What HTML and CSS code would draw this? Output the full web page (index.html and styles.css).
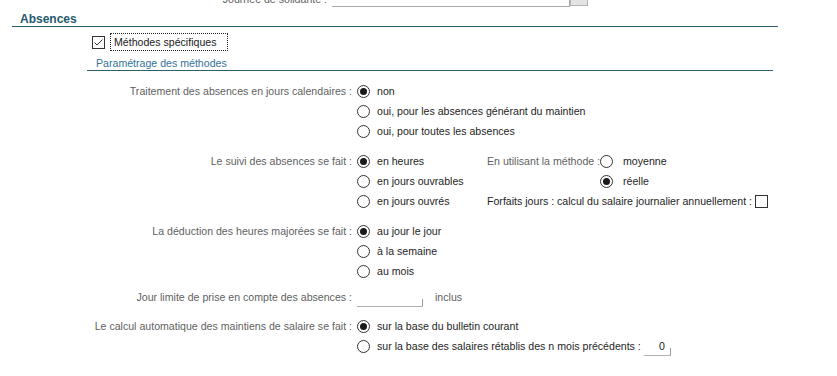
FILE: index.html
```html
<!DOCTYPE html>
<html lang="fr">
<head>
<meta charset="utf-8">
<title>Absences</title>
<link rel="stylesheet" href="styles.css">
</head>
<body>
<div class="top">
  <span class="top-label">Journée de solidarité :</span>
  <span class="top-input"></span>
  <span class="top-btn"></span>
</div>

<div class="section-title">Absences</div>

<div class="chk-row">
  <svg class="chk" width="13" height="13" viewBox="0 0 13 13"><rect x="0.5" y="0.5" width="12" height="12" fill="#fff" stroke="#333"/><polyline points="2.5,6.5 5,9 10.5,3.5" fill="none" stroke="#333" stroke-width="1"/></svg>
  <span class="chk-label">Méthodes spécifiques</span>
</div>

<div class="sub-title">Paramétrage des méthodes</div>

<div class="form">
  <div class="group g1">
    <div class="label">Traitement des absences en jours calendaires :</div>
    <div class="opts">
      <div class="opt"><span class="radio on"></span>non</div>
      <div class="opt"><span class="radio"></span>oui, pour les absences générant du maintien</div>
      <div class="opt"><span class="radio"></span>oui, pour toutes les absences</div>
    </div>
  </div>

  <div class="group g2">
    <div class="label">Le suivi des absences se fait :</div>
    <div class="opts">
      <div class="opt"><span class="radio on"></span>en heures</div>
      <div class="opt"><span class="radio"></span>en jours ouvrables</div>
      <div class="opt"><span class="radio"></span>en jours ouvrés</div>
    </div>
    <div class="right">
      <div class="label rlabel">En utilisant la méthode :</div>
      <div class="opt"><span class="radio wide"></span>moyenne</div>
      <div class="rspacer"></div>
      <div class="opt"><span class="radio wide on"></span>réelle</div>
      <div class="forfait"><span class="flabel">Forfaits jours : calcul du salaire journalier annuellement :</span><span class="box"></span></div>
    </div>
  </div>

  <div class="group g3">
    <div class="label">La déduction des heures majorées se fait :</div>
    <div class="opts">
      <div class="opt"><span class="radio on"></span>au jour le jour</div>
      <div class="opt"><span class="radio"></span>à la semaine</div>
      <div class="opt"><span class="radio"></span>au mois</div>
    </div>
  </div>

  <div class="group g4">
    <div class="label">Jour limite de prise en compte des absences :</div>
    <div class="opt"><span class="field day"></span><span class="muted">inclus</span></div>
  </div>

  <div class="group g5">
    <div class="label">Le calcul automatique des maintiens de salaire se fait :</div>
    <div class="opts">
      <div class="opt"><span class="radio on"></span>sur la base du bulletin courant</div>
      <div class="opt"><span class="radio"></span>sur la base des salaires rétablis des n mois précédents :<span class="field months">0</span></div>
    </div>
  </div>
</div>
</body>
</html>
```

FILE: styles.css
```css
html, body {
  margin: 0;
  padding: 0;
  background: #ffffff;
}

body {
  font-family: "Liberation Sans", Arial, sans-serif;
  font-size: 10.6px;
  color: #1e1e1e;
}

/* partially visible row at top */
.top {
  display: flex;
  align-items: flex-end;
  height: 7px;
  overflow: hidden;
}

.top-label {
  width: 327px;
  text-align: right;
  line-height: 12px;
  margin-bottom: 2px;
  color: #606060;
}

.top-input {
  box-sizing: border-box;
  margin-left: 5px;
  width: 238px;
  height: 20px;
  border-bottom: 1px solid #a9a9a9;
  border-right: 1px solid #a9a9a9;
}

.top-btn {
  box-sizing: border-box;
  width: 18px;
  height: 20px;
  margin-bottom: 1px;
  background: #e3e3e3;
  border: 1px solid #b5b5b5;
}

/* section header */
.section-title {
  margin: 5px 0 0 12px;
  width: 766px;
  padding-left: 8px;
  box-sizing: border-box;
  height: 15px;
  line-height: 14px;
  font-size: 12px;
  font-weight: bold;
  color: #265a70;
  border-bottom: 1px solid #2e5f6e;
}

.chk-row {
  display: flex;
  align-items: center;
  margin: 6px 0 0 92px;
  height: 18px;
}

.chk {
  display: block;
  flex: none;
}

.chk-label {
  box-sizing: border-box;
  margin-left: 5px;
  width: 118px;
  height: 18px;
  line-height: 16px;
  padding-left: 3px;
  border: 1px dotted #222;
  color: #1a1a1a;
}

.sub-title {
  box-sizing: border-box;
  margin: 5px 0 0 87px;
  width: 686px;
  height: 15px;
  line-height: 14px;
  padding-left: 9px;
  color: #33739a;
  border-bottom: 1px solid #2e5f6e;
}

/* form rows */
.form {
  padding-top: 10px;
}

.group {
  display: grid;
  grid-template-columns: 352px auto;
  column-gap: 5px;
  align-items: start;
}

.g2 {
  grid-template-columns: 352px 125px auto;
  margin-top: 10px;
}

.g3 { margin-top: 10px; }
.g4 { margin-top: 6px; }
.g5 { margin-top: 9px; }

.label {
  text-align: right;
  line-height: 20px;
  color: #5f5f5f;
  white-space: nowrap;
}

.opts {
  display: flex;
  flex-direction: column;
}

.opt {
  display: flex;
  align-items: center;
  height: 20px;
  white-space: nowrap;
}

.radio {
  box-sizing: border-box;
  flex: none;
  width: 13px;
  height: 13px;
  margin-right: 7px;
  border: 1px solid #333333;
  border-radius: 50%;
  background: #ffffff;
  display: flex;
  align-items: center;
  justify-content: center;
}

.radio.wide {
  margin-right: 10px;
}

.radio.on::after {
  content: "";
  width: 7px;
  height: 7px;
  border-radius: 50%;
  background: #1a1a1a;
}

/* right column of group 2 */
.right {
  display: grid;
  grid-template-columns: 111px auto;
  column-gap: 2px;
  align-items: center;
}

.rlabel {
  text-align: right;
}

.rspacer {
  height: 20px;
}

.forfait {
  grid-column: 1 / 3;
  display: flex;
  align-items: center;
  height: 20px;
  white-space: nowrap;
}

.flabel {
  color: #1e1e1e;
}

.box {
  box-sizing: border-box;
  width: 13px;
  height: 13px;
  margin-left: 3px;
  border: 1px solid #333333;
  background: #ffffff;
}

/* text fields with bottom line and small right tick */
.field {
  box-sizing: border-box;
  display: block;
  height: 14px;
  margin-top: 6px;
  border-bottom: 1px solid #b0b0b0;
  background: linear-gradient(#9a9a9a, #9a9a9a) right bottom / 1px 7px no-repeat;
}

.field.day {
  width: 66px;
  margin-right: 12px;
}

.field.months {
  width: 27px;
  margin-left: 3px;
  text-align: right;
  padding-right: 6px;
  line-height: 8px;
  color: #1e1e1e;
}

.muted {
  color: #5f5f5f;
}
```
